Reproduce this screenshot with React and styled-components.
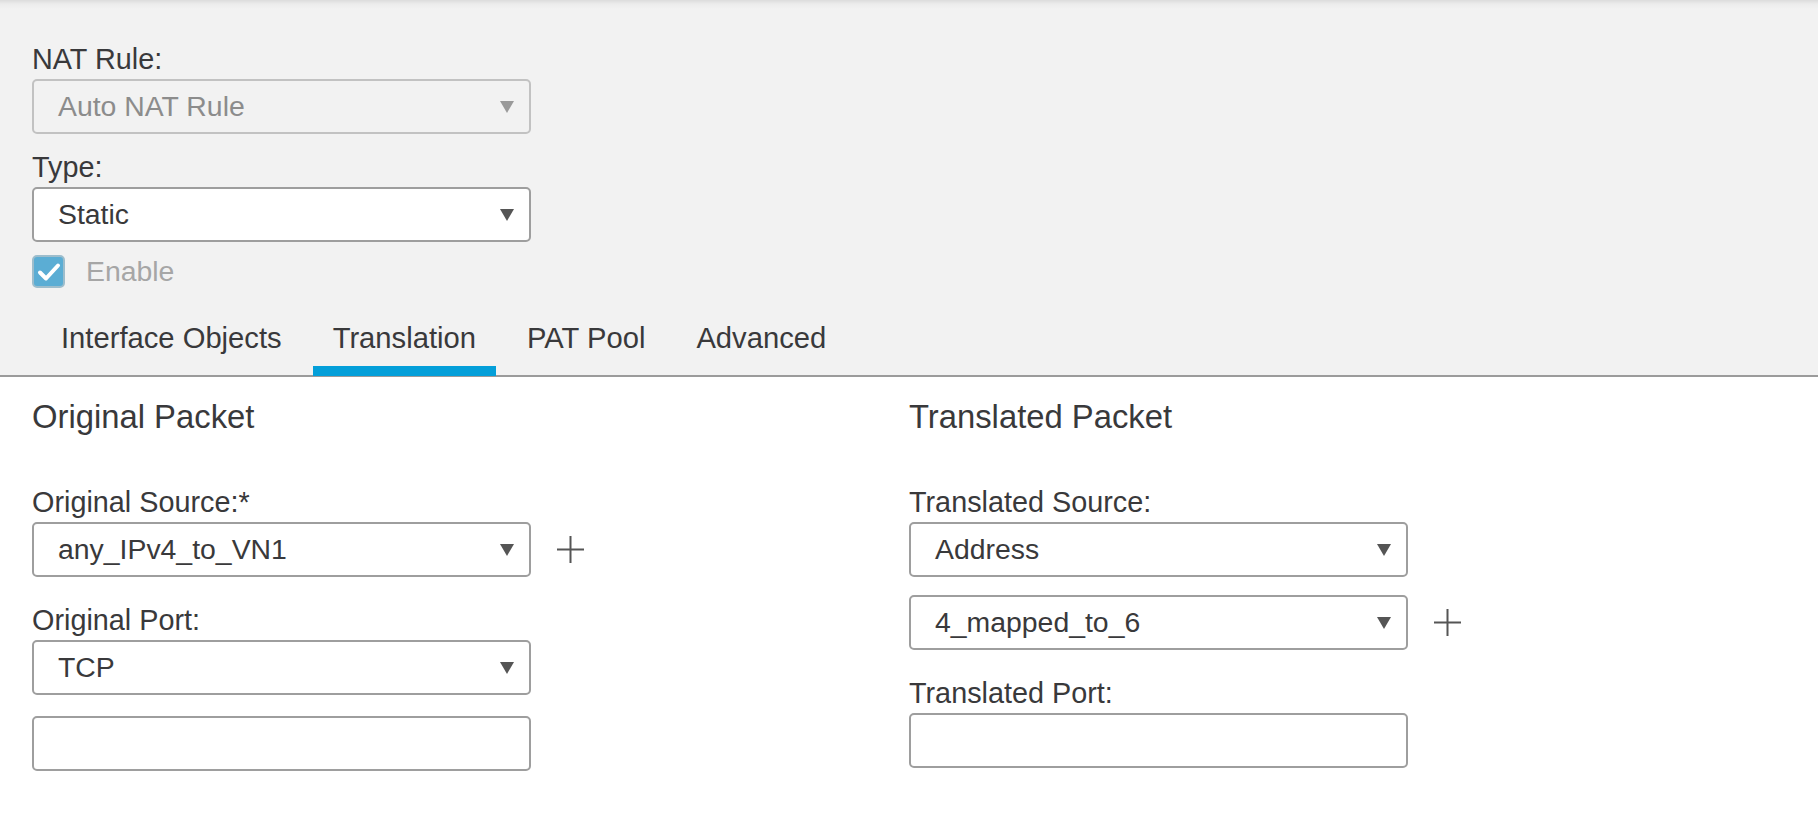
import React from "react";
import styled, { createGlobalStyle } from "styled-components";

const GlobalStyle = createGlobalStyle`
  html, body {
    margin: 0;
    padding: 0;
    background: #ffffff;
  }
  body {
    font-family: "Liberation Sans", Arial, sans-serif;
    color: #39393b;
  }
`;

const Page = styled.div`
  width: 1818px;
  min-height: 832px;
  background: #ffffff;
`;

const TopPanel = styled.div`
  background: linear-gradient(#dcdcdc 0px, #ececec 4px, #f2f2f2 9px);
  padding: 43px 0 0 32px;
  border-bottom: 2px solid #9b9b9b;
`;

const Label = styled.div`
  font-size: 28.8px;
  line-height: 32px;
  color: #39393b;
  margin-bottom: 4px;
`;

const Group = styled.div`
  margin-top: ${(p) => p.$top || 0}px;
`;

const SelectBox = styled.div`
  box-sizing: border-box;
  width: 499px;
  height: 55px;
  display: flex;
  align-items: center;
  justify-content: space-between;
  padding: 0 15px 0 24px;
  border: 2px solid ${(p) => (p.$disabled ? "#c2c2c2" : "#9e9e9e")};
  border-radius: 5px;
  background: ${(p) => (p.$disabled ? "#f2f2f2" : "#ffffff")};
  color: ${(p) => (p.$disabled ? "#8c8c8c" : "#39393b")};
  font-size: 28.4px;
`;

const InputBox = styled.div`
  box-sizing: border-box;
  width: 499px;
  height: 55px;
  border: 2px solid #9e9e9e;
  border-radius: 5px;
  background: #ffffff;
  margin-top: ${(p) => p.$top || 0}px;
`;

const CheckRow = styled.div`
  display: flex;
  align-items: center;
  gap: 21px;
  margin-top: 13px;
  height: 33px;
`;

const CheckBox = styled.div`
  box-sizing: border-box;
  width: 33px;
  height: 33px;
  border: 2px solid #9dbdcc;
  border-radius: 5px;
  background: #5badd4;
  display: flex;
  align-items: center;
  justify-content: center;
`;

const CheckText = styled.span`
  font-size: 28.4px;
  color: #a6a6a6;
`;

const Tabs = styled.div`
  display: flex;
  gap: 11px;
  margin: 12px 0 0 9px;
`;

const Tab = styled.div`
  font-size: 29.2px;
  line-height: 32px;
  padding: 22px 20px 12px;
  color: #39393b;
  border-bottom: 10px solid ${(p) => (p.$active ? "#049fd9" : "transparent")};
  margin-bottom: -1px;
`;

const Body = styled.div`
  display: grid;
  grid-template-columns: 877px 1fr;
  padding: 22px 0 40px 32px;
`;

const Column = styled.div`
  display: flex;
  flex-direction: column;
`;

const Heading = styled.div`
  font-size: 32.8px;
  line-height: 36px;
  color: #39393b;
  margin-bottom: 51px;
`;

const FieldRow = styled.div`
  display: flex;
  align-items: center;
  gap: 25px;
  margin-top: ${(p) => p.$top || 0}px;
`;

const Caret = ({ color = "#555555" }) => (
  <svg width="14" height="12" viewBox="0 0 14 12">
    <polygon points="0,0 14,0 7,12" fill={color} />
  </svg>
);

const Plus = () => (
  <svg width="29" height="29" viewBox="0 0 29 29">
    <path d="M14.5 1v27M1 14.5h27" stroke="#555555" strokeWidth="2" fill="none" />
  </svg>
);

const Check = () => (
  <svg width="24" height="20" viewBox="0 0 24 20">
    <path d="M3 10.5l6 6L21 3.5" stroke="#ffffff" strokeWidth="4" fill="none" strokeLinecap="round" strokeLinejoin="round" />
  </svg>
);

const Select = ({ value, disabled }) => (
  <SelectBox $disabled={disabled}>
    <span>{value}</span>
    <Caret color={disabled ? "#9a9a9a" : "#555555"} />
  </SelectBox>
);

const tabs = ["Interface Objects", "Translation", "PAT Pool", "Advanced"];

export default function App() {
  return (
    <Page>
      <GlobalStyle />
      <TopPanel>
        <Group>
          <Label>NAT Rule:</Label>
          <Select value="Auto NAT Rule" disabled />
        </Group>
        <Group $top={17}>
          <Label>Type:</Label>
          <Select value="Static" />
        </Group>
        <CheckRow>
          <CheckBox>
            <Check />
          </CheckBox>
          <CheckText>Enable</CheckText>
        </CheckRow>
        <Tabs>
          {tabs.map((t) => (
            <Tab key={t} $active={t === "Translation"}>
              {t}
            </Tab>
          ))}
        </Tabs>
      </TopPanel>
      <Body>
        <Column>
          <Heading>Original Packet</Heading>
          <Group>
            <Label>Original Source:*</Label>
            <FieldRow>
              <Select value="any_IPv4_to_VN1" />
              <Plus />
            </FieldRow>
          </Group>
          <Group $top={27}>
            <Label>Original Port:</Label>
            <Select value="TCP" />
            <InputBox $top={21} />
          </Group>
        </Column>
        <Column>
          <Heading>Translated Packet</Heading>
          <Group>
            <Label>Translated Source:</Label>
            <Select value="Address" />
            <FieldRow $top={18}>
              <Select value="4_mapped_to_6" />
              <Plus />
            </FieldRow>
          </Group>
          <Group $top={27}>
            <Label>Translated Port:</Label>
            <InputBox />
          </Group>
        </Column>
      </Body>
    </Page>
  );
}
